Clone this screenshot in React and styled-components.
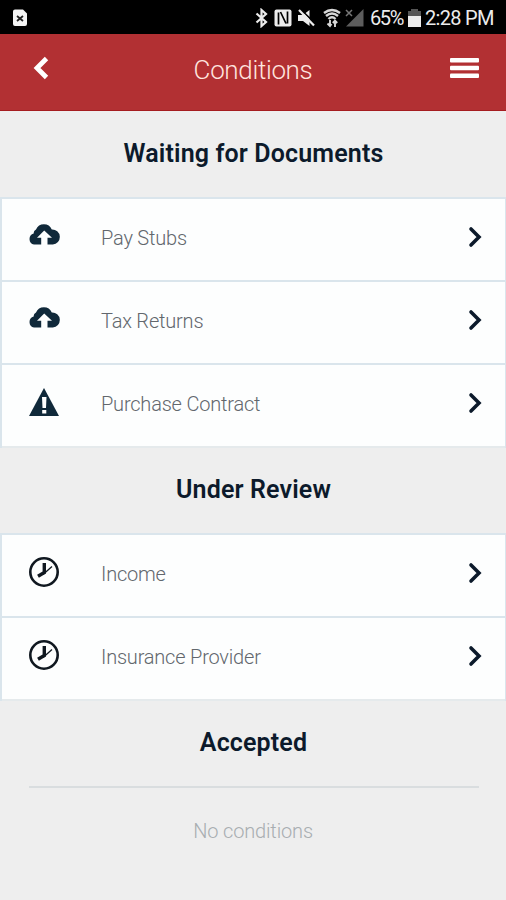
import React from "react";
import styled, { createGlobalStyle } from "styled-components";

const GlobalStyle = createGlobalStyle`
  * { box-sizing: border-box; }
  body { margin: 0; background: #eeeeee; font-family: Roboto, "Liberation Sans", sans-serif; }
  svg { display: block; flex: none; }
`;

const Screen = styled.main`
  width: 506px;
  height: 900px;
  overflow: hidden;
  background: #eeeeee;
  color: #0c1a2b;
`;

const StatusBar = styled.div`
  height: 34px;
  padding: 1px 12px 0 12px;
  display: flex;
  align-items: center;
  justify-content: space-between;
  background: #000;
  color: #ececec;
`;

const StatusGroup = styled.div`
  display: flex;
  align-items: center;
`;

const StatusIcon = styled.svg`
  width: ${(p) => p.$w}px;
  height: 20px;
  margin-right: ${(p) => p.$gap}px;
`;

const StatusText = styled.span`
  width: ${(p) => p.$w}px;
  margin-right: ${(p) => p.$gap || 0}px;
  font-size: 20px;
  line-height: 22px;
  letter-spacing: ${(p) => p.$ls || 0}px;
  white-space: nowrap;
  padding-top: 1px;
`;

const Header = styled.header`
  height: 77px;
  padding: 0 27px 0 33px;
  display: grid;
  grid-template-columns: 40px 1fr 46px;
  align-items: center;
  background: #b23033;
  border-bottom: 1px solid #a51c20;
`;

const IconButton = styled.button`
  padding: 0 0 8px;
  border: 0;
  background: none;
  display: flex;
  justify-content: ${(p) => (p.$end ? "flex-end" : "flex-start")};
`;

const HeaderTitle = styled.h1`
  margin: 0;
  padding-bottom: 4px;
  text-align: center;
  font-size: 26px;
  font-weight: 300;
  letter-spacing: -0.35px;
  color: #ffe4df;
`;

const SectionTitle = styled.h2`
  margin: 0;
  height: 86px;
  padding-left: 1px;
  line-height: 85px;
  text-align: center;
  font-size: 25px;
  font-weight: 600;
  letter-spacing: 0.15px;
  ul + & { height: 85px; line-height: 84px; }
`;

const List = styled.ul`
  margin: 0;
  padding: 0;
  list-style: none;
  border: solid #dae5ec;
  border-width: 2px 1px 0 2px;
`;

const Row = styled.li`
  height: 83px;
  padding: 0 23px 6px 26px;
  display: grid;
  grid-template-columns: 73px 1fr 14px;
  align-items: center;
  background: #fdfefe;
  border-bottom: 2px solid #dae5ec;
  &:last-child { border-bottom-color: #e5eaec; }
`;

const RowLabel = styled.span`
  padding-top: 3px;
  font-size: 20px;
  font-weight: 300;
  letter-spacing: -0.2px;
  color: #62676d;
`;

const Divider = styled.hr`
  margin: 0 27px 0 29px;
  border: 0;
  height: 2px;
  background: #d9dddf;
`;

const EmptyText = styled.p`
  margin: 31px 0 0;
  text-align: center;
  font-size: 20px;
  line-height: 24px;
  font-weight: 300;
  letter-spacing: -0.15px;
  color: #a8adb1;
`;

const CloudIcon = () => (
  <svg width="32" height="28" viewBox="0 0 32 28">
    <path fill="#10293a" d="M6 21.5A5.6 5.6 0 0 1 5.7 10.6 A4 4 0 0 1 8 6.5 A8.6 8.6 0 0 1 23.8 6.5 A7.4 7.4 0 0 1 24.8 21.5H19.5V14.8H24L16.2 7.6L9 14.8H13.2V21.5Z" />
  </svg>
);

const WarningIcon = () => (
  <svg width="32" height="32" viewBox="0 0 32 32">
    <path fill="#10293a" d="M16 1L31 29H1Z" />
    <path fill="#fff" d="M14 10h4.5l-.5 11h-3.5zM14.2 23h4.1v3.5h-4.1z" />
  </svg>
);

const ClockIcon = () => (
  <svg width="32" height="34" viewBox="0 0 32 34" fill="none" stroke="#101820">
    <circle cx="16" cy="16" r="13.7" strokeWidth="2.6" />
    <path d="M16.3 7v9.5L10 20.3" strokeWidth="3.4" />
    <path d="M15 18.5L24 10.5" strokeWidth="1.4" />
  </svg>
);

const ChevronRight = () => (
  <svg width="14" height="22" viewBox="0 0 14 22" fill="none">
    <path d="M3 3L11 11L3 19" stroke="#0c1a2b" strokeWidth="3.6" strokeLinecap="round" />
  </svg>
);

const icons = { cloud: CloudIcon, warning: WarningIcon, clock: ClockIcon };

function ConditionList({ items }) {
  return (
    <List>
      {items.map(({ label, icon }) => {
        const Icon = icons[icon];
        return (
          <Row key={label}>
            <Icon />
            <RowLabel>{label}</RowLabel>
            <ChevronRight />
          </Row>
        );
      })}
    </List>
  );
}

function StatusIcons() {
  return (
    <StatusGroup>
      <StatusIcon $w={13} $gap={6} viewBox="0 0 13 20" fill="none" stroke="#ececec" strokeWidth="2.2">
        <path d="M1.5 5.5L11 14L6.5 18V2L11 6L1.5 14.5" />
      </StatusIcon>
      <StatusIcon $w={18} $gap={5} viewBox="0 0 18 20" fill="none">
        <rect x="0.5" y="1.5" width="17" height="17" rx="2" fill="#ececec" />
        <path d="M4.5 16.5V4.5M13.5 3.5V15.5M6.5 4L12 15.5" stroke="#000" strokeWidth="1.7" />
      </StatusIcon>
      <StatusIcon $w={18} $gap={8} viewBox="0 0 18 20">
        <path fill="#ececec" d="M1 7H6L12.5 2V18L6 13H1Z" />
        <path d="M3.5 1L18.5 16" stroke="#000" strokeWidth="1.6" />
        <path d="M2 2L17 17.5" stroke="#ececec" strokeWidth="2.2" />
      </StatusIcon>
      <StatusIcon $w={18} $gap={4} viewBox="0 0 18 20" fill="none" stroke="#d8d8d8">
        <path d="M1 5Q9-1 17 5M3 8Q9 3 15 8M5.5 11Q9 7.5 12.5 11" strokeWidth="2.4" />
        <path d="M7 12v6M4.5 15.5L7 18L8.5 16M12 19v-6M9.8 15L12 12.7L14.2 15" strokeWidth="1.9" />
      </StatusIcon>
      <StatusIcon $w={19} $gap={6} viewBox="0 0 19 20">
        <path d="M18.5 1V18.5H1Z" fill="#5d5d5d" />
        <path d="M1 2L7 8M7 2L1 8" stroke="#777" strokeWidth="1.5" />
      </StatusIcon>
      <StatusText $w={34} $gap={4} $ls={-1.4}>65%</StatusText>
      <StatusIcon $w={13} $gap={4} viewBox="0 0 13 20">
        <path d="M3 1h7v2h3v6H0V3h3z" fill="#555" />
        <path d="M0 8h13v11H0z" fill="#ececec" />
      </StatusIcon>
      <StatusText $w={69} $ls={-0.7}>2:28 PM</StatusText>
    </StatusGroup>
  );
}

export default function App() {
  return (
    <>
      <GlobalStyle />
      <Screen>
        <StatusBar>
          <StatusIcon $w={16} $gap={0} viewBox="0 0 16 20">
            <path d="M3 1.5H11L15 5.5V16a2 2 0 0 1-2 2H3a2 2 0 0 1-2-2V3.5a2 2 0 0 1 2-2z" fill="#f5f5f5" />
            <path d="M5 8L11 13M11 8L5 13" stroke="#222" strokeWidth="1.8" />
          </StatusIcon>
          <StatusIcons />
        </StatusBar>
        <Header>
          <IconButton aria-label="Back">
            <svg width="17" height="26" viewBox="0 0 17 26" fill="none">
              <path d="M13.5 3.5L4 13L13.5 22.5" stroke="#fff" strokeWidth="4.8" />
            </svg>
          </IconButton>
          <HeaderTitle>Conditions</HeaderTitle>
          <IconButton $end aria-label="Menu">
            <svg width="29" height="22" viewBox="0 0 29 22" fill="#fff">
              <rect y="1" width="29" height="4.5" rx="1" />
              <rect y="8.8" width="29" height="4.5" rx="1" />
              <rect y="16.5" width="29" height="4.5" rx="1" />
            </svg>
          </IconButton>
        </Header>
        <SectionTitle>Waiting for Documents</SectionTitle>
        <ConditionList
          items={[
            { label: "Pay Stubs", icon: "cloud" },
            { label: "Tax Returns", icon: "cloud" },
            { label: "Purchase Contract", icon: "warning" },
          ]}
        />
        <SectionTitle>Under Review</SectionTitle>
        <ConditionList
          items={[
            { label: "Income", icon: "clock" },
            { label: "Insurance Provider", icon: "clock" },
          ]}
        />
        <SectionTitle>Accepted</SectionTitle>
        <Divider />
        <EmptyText>No conditions</EmptyText>
      </Screen>
    </>
  );
}
